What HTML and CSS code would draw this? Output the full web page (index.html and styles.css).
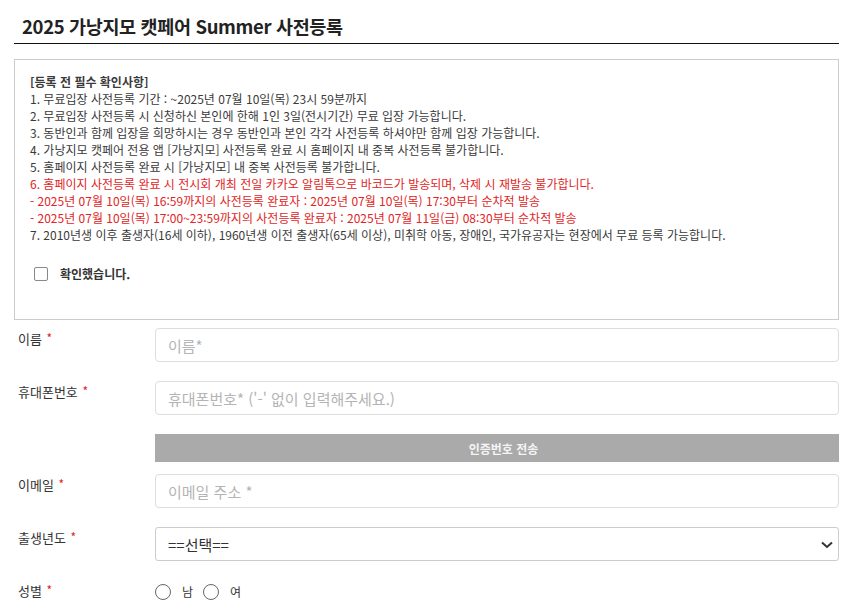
FILE: index.html
```html
<!DOCTYPE html>
<html lang="ko">
<head>
<meta charset="utf-8">
<title>2025 가낭지모 캣페어 Summer 사전등록</title>
<link rel="stylesheet" href="styles.css">
</head>
<body>
<div class="wrap">
  <h1 class="title">2025 가낭지모 캣페어 Summer 사전등록</h1>

  <div class="notice">
    <p class="notice-head">[등록 전 필수 확인사항]</p>
    <p>1. 무료입장 사전등록 기간 : ~2025년 07월 10일(목) 23시 59분까지</p>
    <p>2. 무료입장 사전등록 시 신청하신 본인에 한해 1인 3일(전시기간) 무료 입장 가능합니다.</p>
    <p>3. 동반인과 함께 입장을 희망하시는 경우 동반인과 본인 각각 사전등록 하셔야만 함께 입장 가능합니다.</p>
    <p>4. 가낭지모 캣페어 전용 앱 [가낭지모] 사전등록 완료 시 홈페이지 내 중복 사전등록 불가합니다.</p>
    <p>5. 홈페이지 사전등록 완료 시 [가낭지모] 내 중복 사전등록 불가합니다.</p>
    <p class="red">6. 홈페이지 사전등록 완료 시 전시회 개최 전일 카카오 알림톡으로 바코드가 발송되며, 삭제 시 재발송 불가합니다.</p>
    <p class="red">- 2025년 07월 10일(목) 16:59까지의 사전등록 완료자 : 2025년 07월 10일(목) 17:30부터 순차적 발송</p>
    <p class="red">- 2025년 07월 10일(목) 17:00~23:59까지의 사전등록 완료자 : 2025년 07월 11일(금) 08:30부터 순차적 발송</p>
    <p>7. 2010년생 이후 출생자(16세 이하), 1960년생 이전 출생자(65세 이상), 미취학 아동, 장애인, 국가유공자는 현장에서 무료 등록 가능합니다.</p>
    <label class="agree"><input type="checkbox" class="chk"><span>확인했습니다.</span></label>
  </div>

  <div class="row row-first">
    <div class="label">이름 <em>*</em></div>
    <div class="field"><input class="input" type="text" placeholder="이름*"></div>
  </div>
  <div class="row">
    <div class="label">휴대폰번호 <em>*</em></div>
    <div class="field"><input class="input" type="text" placeholder="휴대폰번호* ('-' 없이 입력해주세요.)"></div>
  </div>
  <div class="row row-btn">
    <div class="label"></div>
    <div class="field"><button class="btn" type="button">인증번호 전송</button></div>
  </div>
  <div class="row row-email">
    <div class="label">이메일 <em>*</em></div>
    <div class="field"><input class="input" type="text" placeholder="이메일 주소 *"></div>
  </div>
  <div class="row">
    <div class="label">출생년도 <em>*</em></div>
    <div class="field select-wrap">
      <select class="select"><option>==선택==</option></select>
      <svg class="chev" width="12" height="8" viewBox="0 0 12 8"><path d="M1 1.5 L6 6 L11 1.5" fill="none" stroke="#333" stroke-width="2"/></svg>
    </div>
  </div>
  <div class="row">
    <div class="label">성별 <em>*</em></div>
    <div class="field radios">
      <label class="radio"><input type="radio" name="g"><span>남</span></label>
      <label class="radio"><input type="radio" name="g"><span>여</span></label>
    </div>
  </div>
</div>
</body>
</html>
```

FILE: styles.css
```css
* { box-sizing: border-box; }

body {
  margin: 0;
  background: #fff;
  font-family: "Noto Sans CJK KR", "Noto Sans", sans-serif;
  color: #333;
}

.wrap {
  margin-left: 14px;
  width: 825px;
}

.title {
  margin: 0;
  padding: 13px 8px 4px;
  font-size: 18.5px;
  line-height: 26px;
  font-weight: 700;
  color: #222;
  letter-spacing: -0.35px;
  border-bottom: 1px solid #111;
}

.notice {
  margin-top: 15px;
  border: 1px solid #ccc;
  padding: 13px 15px 37px;
  font-size: 12px;
  line-height: 17px;
  color: #3a3a3a;
  letter-spacing: 0;
}

.notice p { margin: 0; }

.notice-head { font-weight: 700; }

.notice .red { color: #e22424; }

.agree {
  display: flex;
  align-items: center;
  gap: 12px;
  margin-top: 22px;
  padding-left: 4px;
  font-weight: 700;
  color: #333;
}

.chk {
  appearance: none;
  -webkit-appearance: none;
  margin: 0;
  width: 14px;
  height: 14px;
  border: 1px solid #888;
  border-radius: 2px;
  background: #fff;
}

.row {
  display: flex;
  margin-top: 19px;
}

.row-first { margin-top: 8px; }
.row-email { margin-top: 12px; }

.label {
  width: 141px;
  flex: none;
  padding-left: 4px;
  font-size: 13px;
  line-height: 20px;
  color: #333;
}

.label em {
  font-style: normal;
  color: #e02020;
  font-size: 12px;
  vertical-align: 1px;
  margin-left: 1px;
}

.field { flex: 1; }

.input {
  display: block;
  width: 100%;
  height: 34px;
  border: 1px solid #ddd;
  border-radius: 4px;
  padding: 0 12px;
  font-family: inherit;
  font-size: 15px;
  color: #333;
  outline: none;
  letter-spacing: 0;
}

.input::placeholder { color: #b4b4b4; }

.btn {
  display: block;
  width: 100%;
  height: 28px;
  border: 0;
  background: #aaa;
  color: #f4f4f4;
  font-family: inherit;
  font-size: 12px;
  font-weight: 700;
  padding: 0 0 0 13px;
}

.select-wrap { position: relative; }

.select {
  appearance: none;
  -webkit-appearance: none;
  display: block;
  width: 100%;
  height: 34px;
  border: 1px solid #ccc;
  border-radius: 3px;
  background: #fff;
  padding: 0 12px;
  font-family: inherit;
  font-size: 15px;
  color: #333;
  outline: none;
}

.chev {
  position: absolute;
  right: 6px;
  top: 14px;
  pointer-events: none;
}

.radios {
  display: flex;
  align-items: center;
  gap: 10px;
  height: 20px;
  padding-top: 3px;
}

.radio {
  display: flex;
  align-items: center;
  gap: 11px;
  font-size: 12px;
  color: #333;
}

.radio input {
  appearance: none;
  -webkit-appearance: none;
  margin: 0;
  width: 16px;
  height: 16px;
  border: 1px solid #666;
  border-radius: 50%;
  background: #fff;
}
```
